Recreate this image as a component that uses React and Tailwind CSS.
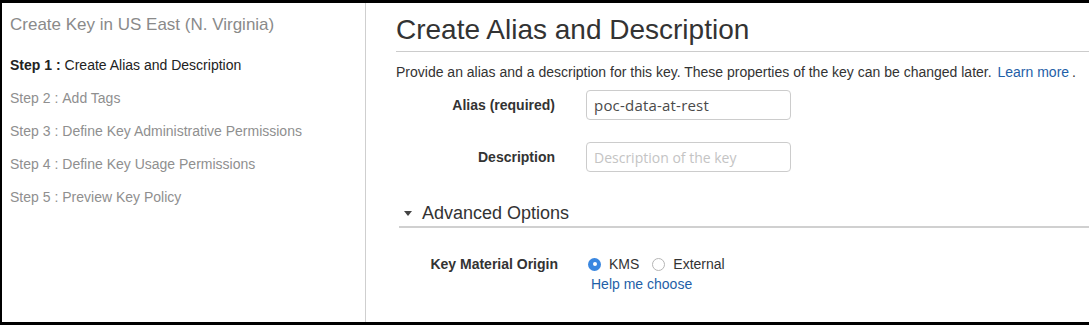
const steps = [
  { n: 1, label: 'Create Alias and Description', active: true },
  { n: 2, label: 'Add Tags' },
  { n: 3, label: 'Define Key Administrative Permissions' },
  { n: 4, label: 'Define Key Usage Permissions' },
  { n: 5, label: 'Preview Key Policy' },
];

function Radio({ checked }) {
  return checked ? (
    <span className="flex h-[13px] w-[13px] shrink-0 items-center justify-center rounded-full bg-[#3a87e0]">
      <span className="block h-[4px] w-[4px] rounded-full bg-white" />
    </span>
  ) : (
    <span className="block h-[13px] w-[13px] shrink-0 rounded-full border border-[#b5b5b5] bg-white" />
  );
}

export default function App() {
  return (
    <div
      className="h-[325px] w-[1089px] bg-black pt-[3px] pb-[3px] pl-[2px]"
      style={{ fontFamily: '"Liberation Sans", Arial, sans-serif' }}
    >
      <div className="flex h-full bg-white">
        {/* sidebar */}
        <div className="w-[364px] shrink-0 border-r border-[#cfcfcf] pl-[8px] pt-[12px]">
          <div className="text-[17px] leading-[20px] text-[#8a8a8a]">
            Create Key in US East (N. Virginia)
          </div>
          <div className="mt-[14px]">
            {steps.map((s) => (
              <div
                key={s.n}
                className={
                  'flex h-[33px] items-center text-[14px] ' +
                  (s.active ? 'text-[#222]' : 'text-[#8f8f8f]')
                }
              >
                <span className={s.active ? 'font-bold' : ''}>Step {s.n} :</span>
                <span className="ml-[4px]">{s.label}</span>
              </div>
            ))}
          </div>
        </div>

        {/* main */}
        <div className="flex-1">
          <div className="ml-[30px] mt-[10px] border-b border-[#cccccc] pb-[4px]">
            <h1 className="text-[28px] leading-[34px] text-[#333]">Create Alias and Description</h1>
          </div>
          <p className="ml-[30px] mt-[10px] text-[14px] leading-[20px] text-[#333]">
            Provide an alias and a description for this key. These properties of the key can be changed later.{' '}
            <span className="ml-[2px] text-[#1f5fa8]">Learn more</span>
            <span className="ml-[3px]">.</span>
          </p>

          <div className="mt-[8px] flex items-center">
            <label className="w-[189px] text-right text-[14px] font-bold text-[#333]">Alias (required)</label>
            <div
              className="ml-[31px] flex h-[30px] w-[205px] items-center rounded-[4px] border border-[#cccccc] px-[7px] text-[15px] tracking-[0.2px] text-[#4a4a4a]"
              style={{ fontFamily: '"Open Sans", sans-serif' }}
            >
              poc-data-at-rest
            </div>
          </div>

          <div className="mt-[22px] flex items-center">
            <label className="w-[189px] text-right text-[14px] font-bold text-[#333]">Description</label>
            <div
              className="ml-[31px] flex h-[30px] w-[205px] items-center rounded-[4px] border border-[#cccccc] px-[7px] text-[14px] text-[#c4c4c4]"
              style={{ fontFamily: '"Open Sans", sans-serif' }}
            >
              Description of the key
            </div>
          </div>

          <div className="ml-[33px] mt-[30px] flex items-center border-b-2 border-[#d0d0d0] pb-[2px]">
            <svg width="8" height="5" viewBox="0 0 8 5" className="ml-[5px]">
              <path d="M0 0 L8 0 L4 5 Z" fill="#444" />
            </svg>
            <span className="ml-[10px] text-[18px] leading-[22px] text-[#333]">Advanced Options</span>
          </div>

          <div className="mt-[26px] flex">
            <label className="w-[192px] text-right text-[14px] leading-[20px] font-bold text-[#333]">Key Material Origin</label>
            <div className="ml-[30px]">
              <div className="flex h-[20px] items-center text-[14px] text-[#333]">
                <Radio checked />
                <span className="ml-[8px]">KMS</span>
                <span className="ml-[13px] flex items-center"><Radio /></span>
                <span className="ml-[8px]">External</span>
              </div>
              <div className="ml-[3px] text-[14px] leading-[20px] text-[#1f5fa8]">Help me choose</div>
            </div>
          </div>
        </div>
      </div>
    </div>
  );
}
